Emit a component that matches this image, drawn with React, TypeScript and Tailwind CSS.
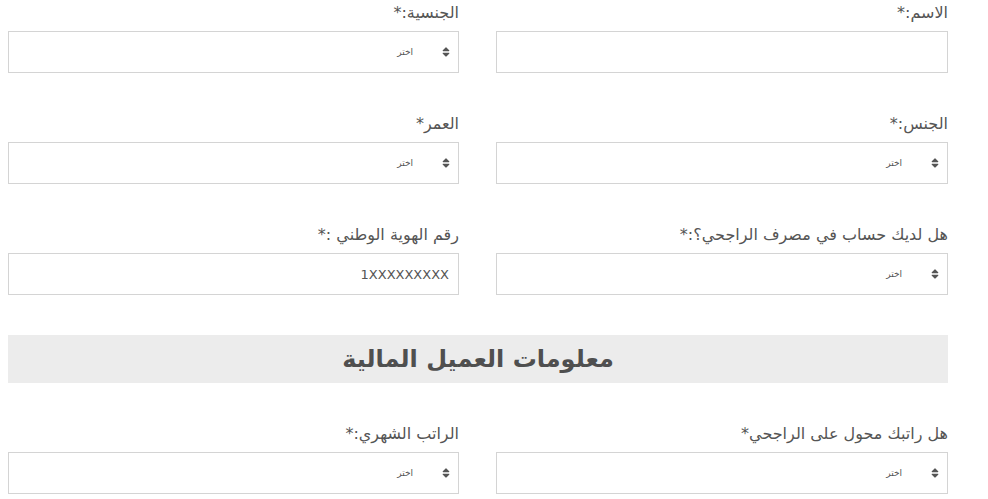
import React from 'react';
import { FaSort } from 'react-icons/fa';

type Field = { label: string; kind: 'text' | 'select'; value?: string };

const rows: Field[][] = [
  [
    { label: 'الاسم:*', kind: 'text' },
    { label: 'الجنسية:*', kind: 'select' },
  ],
  [
    { label: 'الجنس:*', kind: 'select' },
    { label: 'العمر*', kind: 'select' },
  ],
  [
    { label: 'هل لديك حساب في مصرف الراجحي؟:*', kind: 'select' },
    { label: 'رقم الهوية الوطني :*', kind: 'text', value: '1XXXXXXXXX' },
  ],
];

const finance: Field[] = [
  { label: 'هل راتبك محول على الراجحي*', kind: 'select' },
  { label: 'الراتب الشهري:*', kind: 'select' },
];

const FieldBox: React.FC<{ field: Field }> = ({ field }) => (
  <div className="flex flex-col">
    <label className="text-[16px] leading-[20px] mb-[8px] text-[#555]">{field.label}</label>
    {field.kind === 'text' ? (
      <input
        readOnly
        value={field.value ?? ''}
        className="h-[42px] w-full border border-[#d4d4d4] bg-white px-[9px] text-[13px] text-[#555] outline-none text-right"
        dir="ltr"
      />
    ) : (
      <div className="h-[42px] w-full border border-[#d4d4d4] bg-white flex items-center gap-[29px] pr-[8px] text-[#555]">
        <FaSort className="w-[8px] h-[12px] text-[#555]" />
        <span className="text-[9px] leading-none">اختر</span>
      </div>
    )}
  </div>
);

export default function App() {
  return (
    <div dir="rtl" className="bg-white min-h-screen font-['DejaVu_Sans',sans-serif]">
      <div className="mr-[40px] ml-[8px] pt-[3px]">
        {rows.map((row, i) => (
          <div key={i} className="grid grid-cols-[452px_451px] gap-x-[37px] mb-[41px]">
            {row.map((f) => (
              <FieldBox key={f.label} field={f} />
            ))}
          </div>
        ))}
        <div className="h-[48px] bg-[#ececec] flex items-center justify-center mt-[-1px] mb-[41px]">
          <h2 className="text-[24px] font-bold text-[#4f4f4f]">معلومات العميل المالية</h2>
        </div>
        <div className="grid grid-cols-[452px_451px] gap-x-[37px]">
          {finance.map((f) => (
            <FieldBox key={f.label} field={f} />
          ))}
        </div>
      </div>
    </div>
  );
}
